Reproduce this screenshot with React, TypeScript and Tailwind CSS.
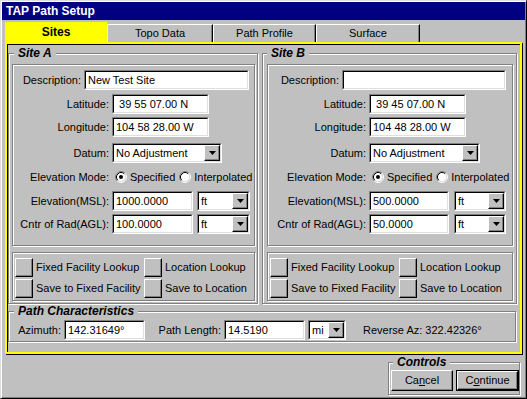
import React from 'react';

// win95-ish bevels
const sunken = 'border border-t-[#808080] border-l-[#808080] border-r-white border-b-white';
const sunkenIn = 'border border-t-black border-l-black border-r-[#dfdfdf] border-b-[#dfdfdf]';
const raised = 'border border-t-white border-l-white border-r-black border-b-black shadow-[inset_-1px_-1px_0_#808080]';
const etched = 'border border-[#808080] shadow-[inset_1px_1px_0_#fff,1px_1px_0_#fff]';

const Field = ({ value, className }: { value: string; className: string }) => (
  <div className={`h-[20px] bg-white ${sunken} ${className}`}>
    <div className={`flex h-full items-center whitespace-pre pl-[2px] ${sunkenIn}`}>{value}</div>
  </div>
);

const Dropdown = ({ value, className }: { value: string; className: string }) => (
  <div className={`h-[20px] bg-white ${sunken} ${className}`}>
    <div className={`flex h-full items-center pl-[2px] ${sunkenIn}`}>
      <span className="flex-1">{value}</span>
      <div className={`flex h-[16px] w-[16px] items-center justify-center bg-[#c0c0c0] ${raised}`}>
        <svg width="7" height="4" viewBox="0 0 7 4">
          <path d="M0 0H7L3.5 4Z" fill="#000" />
        </svg>
      </div>
    </div>
  </div>
);

const Radio = ({ checked }: { checked?: boolean }) => (
  <svg width="12" height="12" viewBox="0 0 12 12" className="shrink-0">
    <circle cx="6" cy="6" r="4.5" fill="#fff" />
    <path d="M2.11 9.89A5.5 5.5 0 0 1 9.89 2.11" fill="none" stroke="#808080" />
    <path d="M9.89 2.11A5.5 5.5 0 0 1 2.11 9.89" fill="none" stroke="#fff" />
    <path d="M2.82 9.18A4.5 4.5 0 0 1 9.18 2.82" fill="none" stroke="#000" />
    <path d="M9.18 2.82A4.5 4.5 0 0 1 2.82 9.18" fill="none" stroke="#dfdfdf" />
    {checked && <circle cx="6" cy="6" r="2" fill="#000" />}
  </svg>
);

const Legend = ({ title, className }: { title: string; className: string }) => (
  <legend className={`bg-[#c0c0c0] px-[4px] text-[12px] font-bold italic leading-[14px] ${className}`}>{title}</legend>
);

const SqButton = () => <div className={`h-[19px] w-[18px] shrink-0 bg-[#c0c0c0] ${raised}`} />;

type Site = {
  title: string;
  box: string;
  frame: string;
  legend: string;
  lw: string;
  dlw: string;
  desc: string;
  descW: string;
  lat: string;
  lon: string;
  datumW: string;
  elev: string;
  elevW: string;
  cntr: string;
  unitW: string;
  gap: string;
};

const siteA: Site = {
  title: 'Site A',
  frame: 'w-[250px] pl-[3px]',
  legend: 'ml-[2px]',
  box: 'w-[243px]',
  lw: 'w-[96px]',
  dlw: 'w-[68px]',
  desc: 'New Test Site',
  descW: 'w-[165px]',
  lat: ' 39 55 07.00 N',
  lon: '104 58 28.00 W',
  datumW: 'w-[110px]',
  elev: '1000.0000',
  elevW: 'w-[81px]',
  cntr: '100.0000',
  unitW: 'w-[53px]',
  gap: 'ml-[4px]',
};

const siteB: Site = {
  title: 'Site B',
  frame: 'ml-[4px] w-[255px] pl-[4px]',
  legend: 'ml-[0px]',
  box: 'w-[246px]',
  lw: 'w-[98px]',
  dlw: 'w-[71px]',
  desc: '',
  descW: 'w-[164px]',
  lat: ' 39 45 07.00 N',
  lon: '104 48 28.00 W',
  datumW: 'w-[111px]',
  elev: '500.0000',
  elevW: 'w-[80px]',
  cntr: '50.0000',
  unitW: 'w-[52px]',
  gap: 'ml-[5px]',
};

const SiteGroup = ({ s }: { s: Site }) => (
  <fieldset className={`pb-[2px] pt-[4px] ${etched} ${s.frame}`}>
    <Legend title={s.title} className={s.legend} />
    <div className={`h-[182px] pt-[5px] ${etched} ${s.box}`}>
      <div className="flex h-[20px] items-center">
        <span className={`text-right ${s.dlw}`}>Description:</span>
        <Field value={s.desc} className={`ml-[3px] ${s.descW}`} />
      </div>
      <div className="mt-[4px] flex h-[20px] items-center">
        <span className={`text-right ${s.lw}`}>Latitude:</span>
        <Field value={s.lat} className="ml-[3px] w-[97px]" />
      </div>
      <div className="mt-[3px] flex h-[20px] items-center">
        <span className={`text-right ${s.lw}`}>Longitude:</span>
        <Field value={s.lon} className="ml-[3px] w-[97px]" />
      </div>
      <div className="mt-[6px] flex h-[20px] items-center">
        <span className={`text-right ${s.lw}`}>Datum:</span>
        <Dropdown value="No Adjustment" className={`ml-[3px] ${s.datumW}`} />
      </div>
      <div className="mt-[6px] flex h-[16px] items-center whitespace-nowrap">
        <span className={`text-right ${s.lw}`}>Elevation Mode:</span>
        <span className="ml-[6px]"><Radio checked /></span>
        <span className="ml-[3px]">Specified</span>
        <span className="ml-[4px]"><Radio /></span>
        <span className="ml-[3px]">Interpolated</span>
      </div>
      <div className="mt-[6px] flex h-[20px] items-center">
        <span className={`text-right ${s.lw}`}>Elevation(MSL):</span>
        <Field value={s.elev} className={`ml-[3px] ${s.elevW}`} />
        <Dropdown value="ft" className={`${s.gap} ${s.unitW}`} />
      </div>
      <div className="mt-[3px] flex h-[20px] items-center">
        <span className={`text-right ${s.lw}`}>Cntr of Rad(AGL):</span>
        <Field value={s.cntr} className={`ml-[3px] ${s.elevW}`} />
        <Dropdown value="ft" className={`${s.gap} ${s.unitW}`} />
      </div>
    </div>
    <div className={`mt-[6px] h-[49px] pl-[2px] pt-[5px] ${etched} ${s.box}`}>
      <div className="grid grid-cols-[129px_auto] gap-y-[2px] whitespace-nowrap">
        <div className="flex items-center gap-[3px]"><SqButton /><span>Fixed Facility Lookup</span></div>
        <div className="flex items-center gap-[3px]"><SqButton /><span>Location Lookup</span></div>
        <div className="flex items-center gap-[3px]"><SqButton /><span>Save to Fixed Facility</span></div>
        <div className="flex items-center gap-[3px]"><SqButton /><span>Save to Location</span></div>
      </div>
    </div>
  </fieldset>
);

const App = () => {
  return (
    <div className="h-[399px] w-[527px] overflow-hidden border border-t-[#dfdfdf] border-l-[#dfdfdf] border-r-black border-b-black bg-[#c0c0c0] p-[1px] font-['Liberation_Sans',Arial,sans-serif] text-[11px] text-black shadow-[inset_1px_1px_0_#fff,inset_-1px_-1px_0_#808080]">
      {/* title bar */}
      <div className="h-[18px] bg-[#000080] pl-[4px] pt-[1px] text-[12px] font-bold leading-[17px] text-white">TAP Path Setup</div>

      {/* tabs */}
      <div className="ml-[3px] mt-[2px] flex h-[20px] items-end">
        <div className="flex h-[20px] w-[102px] items-center justify-center bg-[#ffff00] text-[12px] font-bold">Sites</div>
        <div className="flex h-[18px] w-[106px] items-center justify-center border-l border-r border-t border-l-white border-r-black border-t-white shadow-[inset_-1px_0_0_#808080]">Topo Data</div>
        <div className="flex h-[18px] w-[103px] items-center justify-center border-l border-r border-t border-l-white border-r-black border-t-white shadow-[inset_-1px_0_0_#808080]">Path Profile</div>
        <div className="flex h-[18px] w-[104px] items-center justify-center border-l border-r border-t border-l-white border-r-black border-t-white shadow-[inset_-1px_0_0_#808080]">Surface</div>
      </div>

      {/* tab page */}
      <div className="ml-[3px] h-[312px] w-[517px] border-2 border-[#ffff00] pl-[1px] pt-[2px] shadow-[inset_1px_1px_0_#000,1px_1px_0_#000]">
        <div className="flex">
          <SiteGroup s={siteA} />
          <SiteGroup s={siteB} />
        </div>

        <fieldset className={`w-[508px] pb-[1px] pt-[2px] ${etched}`}>
          <Legend title="Path Characteristics" className="ml-[5px]" />
          <div className="flex h-[20px] items-center whitespace-nowrap">
            <span className="w-[52px] text-right">Azimuth:</span>
            <Field value="142.31649°" className="ml-[3px] w-[81px]" />
            <span className="w-[76px] text-right">Path Length:</span>
            <Field value="14.5190" className="ml-[3px] w-[81px]" />
            <Dropdown value="mi" className="ml-[3px] w-[38px]" />
            <span className="ml-[17px]">Reverse Az: 322.42326°</span>
          </div>
        </fieldset>
      </div>

      {/* controls */}
      <fieldset className={`ml-[386px] mt-[1px] w-[131px] pb-[3px] pl-[2px] pt-[1px] ${etched}`}>
        <Legend title="Controls" className="ml-[2px]" />
        <div className="flex gap-[3px]">
          <div className={`flex h-[21px] w-[62px] items-center justify-center bg-[#c0c0c0] ${raised}`}>
            <span>Ca<u>n</u>cel</span>
          </div>
          <div className="h-[21px] w-[63px] border border-black">
            <div className={`flex h-full w-full items-center justify-center bg-[#c0c0c0] ${raised}`}>
              <span>C<u>o</u>ntinue</span>
            </div>
          </div>
        </div>
      </fieldset>
    </div>
  );
};

export default App;
